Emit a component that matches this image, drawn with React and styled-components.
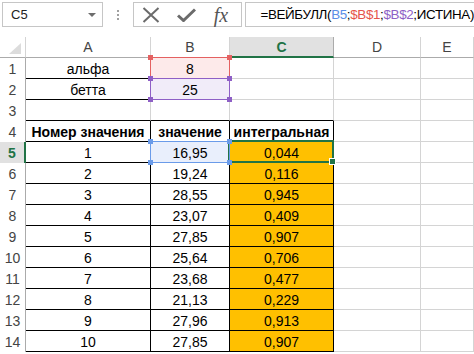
import React from "react";
import styled, { createGlobalStyle } from "styled-components";

const Global = createGlobalStyle`
  body {
    margin: 0;
    background: #fff;
    font-family: "Liberation Sans", Arial, sans-serif;
  }
`;

const Page = styled.div`
  width: 474px;
  height: 354px;
  overflow: hidden;
  background: #fff;
`;

const FormulaBar = styled.div`
  display: flex;
  height: 37px;
  box-sizing: border-box;
  padding: 2px 0 0 2px;
  align-items: flex-start;
`;

const NameBox = styled.div`
  width: 102px;
  height: 25px;
  box-sizing: border-box;
  border: 1px solid #c6c6c6;
  display: flex;
  align-items: center;
  justify-content: space-between;
  padding: 0 6px 0 8px;
  font-size: 13px;
  color: #222;
`;

const Caret = styled.span`
  width: 0;
  height: 0;
  border-left: 4px solid transparent;
  border-right: 4px solid transparent;
  border-top: 4px solid #6d6d6d;
`;

const Dots = styled.div`
  width: 30px;
  height: 25px;
  display: flex;
  flex-direction: column;
  align-items: center;
  justify-content: center;
  gap: 2px;
  span {
    width: 2px;
    height: 2px;
    background: #a0a0a0;
  }
`;

const IconBox = styled.div`
  width: 111px;
  height: 25px;
  box-sizing: border-box;
  border: 1px solid #c6c6c6;
  display: flex;
  align-items: center;
  padding-left: 8px;
  gap: 17px;
`;

const Fx = styled.span`
  font-family: "Liberation Serif", serif;
  font-style: italic;
  font-size: 20px;
  color: #555;
  line-height: 1;
  margin-left: 1px;
`;

const FormulaInput = styled.div`
  flex: 1;
  margin-left: 3px;
  height: 25px;
  box-sizing: border-box;
  border: 1px solid #c6c6c6;
  border-right: none;
  display: flex;
  align-items: center;
  padding-left: 14px;
  font-size: 13.4px;
  letter-spacing: -0.35px;
  color: #000;
  white-space: nowrap;
`;

const Ref = styled.span`
  color: ${(p) => p.$color};
`;

const Sheet = styled.div`
  display: grid;
  grid-template-columns: 26px 125px 79px 104px 87px 53px;
  grid-auto-rows: 21px;
`;

const Corner = styled.div`
  box-sizing: border-box;
  border-right: 1px solid #d4d4d4;
  border-bottom: 1px solid #ababab;
  position: relative;
  &::after {
    content: "";
    position: absolute;
    right: 4px;
    bottom: 3px;
    width: 0;
    height: 0;
    border-left: 12px solid transparent;
    border-bottom: 11px solid #dcdcdc;
  }
`;

const ColHead = styled.div`
  box-sizing: border-box;
  display: flex;
  align-items: center;
  justify-content: center;
  font-size: 14px;
  color: ${(p) => (p.$active ? "#217346" : "#444")};
  font-weight: ${(p) => (p.$active ? "bold" : "normal")};
  background: ${(p) => (p.$active ? "#e1e1e1" : "#fff")};
  border-right: 1px solid ${(p) => (p.$active ? "#ababab" : "#d4d4d4")};
  border-bottom: ${(p) => (p.$active ? "2px solid #217346" : "1px solid #ababab")};
`;

const RowHead = styled.div`
  box-sizing: border-box;
  display: flex;
  align-items: center;
  justify-content: center;
  font-size: 14px;
  padding-top: 1px;
  color: ${(p) => (p.$active ? "#217346" : "#444")};
  font-weight: ${(p) => (p.$active ? "bold" : "normal")};
  background: ${(p) => (p.$active ? "#e1e1e1" : "#fff")};
  border-right: ${(p) => (p.$active ? "2px solid #217346" : "1px solid #ababab")};
`;

const Cell = styled.div`
  position: relative;
  box-sizing: border-box;
  display: flex;
  align-items: center;
  justify-content: center;
  font-size: 14px;
  padding-top: 1px;
  color: #000;
  white-space: nowrap;
  font-weight: ${(p) => (p.$bold ? "bold" : "normal")};
  background: ${(p) => p.$bg || "#fff"};
  border-right: 1px solid ${(p) => (p.$r ? "#000" : "#d4d4d4")};
  border-bottom: 1px solid ${(p) => (p.$b ? "#000" : "#d4d4d4")};
`;

const Highlight = styled.div`
  position: absolute;
  top: -1px;
  left: -1px;
  right: -1px;
  bottom: -1px;
  border: 1px solid ${(p) => p.$color};
  pointer-events: none;
  z-index: ${(p) => p.$z || 1};
`;

const Handle = styled.span`
  position: absolute;
  width: 5px;
  height: 5px;
  background: ${(p) => p.$color};
  ${(p) => (p.$top ? "top: -3px;" : "bottom: -3px;")}
  ${(p) => (p.$left ? "left: -3px;" : "right: -3px;")}
`;

const Selection = styled.div`
  position: absolute;
  top: -2px;
  left: -2px;
  right: -1px;
  bottom: -1px;
  border: 2px solid #217346;
  z-index: 3;
  &::after {
    content: "";
    position: absolute;
    right: -4px;
    bottom: -4px;
    width: 5px;
    height: 5px;
    background: #217346;
    border: 1px solid #fff;
  }
`;

const Range = ({ color, corners, z }) => (
  <Highlight $color={color} $z={z}>
    {corners.map((c) => (
      <Handle key={c} $color={color} $top={c[0] === "t"} $left={c[1] === "l"} />
    ))}
  </Highlight>
);

const data = [
  ["16,95", "0,044"],
  ["19,24", "0,116"],
  ["28,55", "0,945"],
  ["23,07", "0,409"],
  ["27,85", "0,907"],
  ["25,64", "0,706"],
  ["23,68", "0,477"],
  ["21,13", "0,229"],
  ["27,96", "0,913"],
  ["27,85", "0,907"],
];

const ORANGE = "#ffc000";

export default function App() {
  return (
    <Page>
      <Global />
      <FormulaBar>
        <NameBox>
          <span>C5</span>
          <Caret />
        </NameBox>
        <Dots>
          <span />
          <span />
          <span />
        </Dots>
        <IconBox>
          <svg width="18" height="16" viewBox="0 0 18 16">
            <path d="M1.5 1 L16.5 15 M16.5 1 L1.5 15" stroke="#6b6b6b" strokeWidth="2" fill="none" />
          </svg>
          <svg width="19" height="14" viewBox="0 0 19 14">
            <path d="M1 7.5 L6.5 12.5 L18 1.5" stroke="#6b6b6b" strokeWidth="3" fill="none" />
          </svg>
          <Fx>fx</Fx>
        </IconBox>
        <FormulaInput>
          =ВЕЙБУЛЛ(<Ref $color="#5b8ee6">B5</Ref>;<Ref $color="#e5534b">$B$1</Ref>;
          <Ref $color="#8e5fc6">$B$2</Ref>;ИСТИНА)
        </FormulaInput>
      </FormulaBar>
      <Sheet>
        <Corner />
        <ColHead>A</ColHead>
        <ColHead>B</ColHead>
        <ColHead $active>C</ColHead>
        <ColHead>D</ColHead>
        <ColHead>E</ColHead>

        <RowHead>1</RowHead>
        <Cell $b>альфа</Cell>
        <Cell $bg="#fdeaea">
          8
          <Range color="#e46161" corners={["tl", "tr"]} />
        </Cell>
        <Cell />
        <Cell />
        <Cell />

        <RowHead>2</RowHead>
        <Cell $b>бетта</Cell>
        <Cell $bg="#f1ecf9">
          25
          <Range color="#8e5fc6" corners={["tl", "tr", "bl", "br"]} z={2} />
        </Cell>
        <Cell />
        <Cell />
        <Cell />

        <RowHead>3</RowHead>
        <Cell $b />
        <Cell $b />
        <Cell $b />
        <Cell />
        <Cell />

        <RowHead>4</RowHead>
        <Cell $b $r $bold>Номер значения</Cell>
        <Cell $b $r $bold>значение</Cell>
        <Cell $b $r $bold>интегральная</Cell>
        <Cell />
        <Cell />

        {data.map(([v, p], i) => (
          <React.Fragment key={i}>
            <RowHead $active={i === 0}>{i + 5}</RowHead>
            <Cell $b $r>{i + 1}</Cell>
            <Cell $b $r $bg={i === 0 ? "#e9effc" : undefined}>
              {v}
              {i === 0 && <Range color="#6a9be9" corners={["tl", "tr", "bl", "br"]} z={4} />}
            </Cell>
            <Cell $b $r $bg={ORANGE}>
              {p}
              {i === 0 && <Selection />}
            </Cell>
            <Cell />
            <Cell />
          </React.Fragment>
        ))}
      </Sheet>
    </Page>
  );
}
